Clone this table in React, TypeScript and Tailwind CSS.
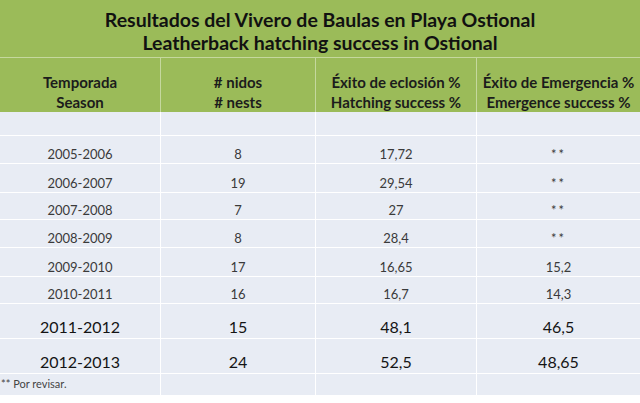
const ROWS = [
  { season: "2005-2006", nests: "8", hatch: "17,72", emerg: "**", h: "h-[28px]", big: false },
  { season: "2006-2007", nests: "19", hatch: "29,54", emerg: "**", h: "h-[29px]", big: false },
  { season: "2007-2008", nests: "7", hatch: "27", emerg: "**", h: "h-[27px]", big: false },
  { season: "2008-2009", nests: "8", hatch: "28,4", emerg: "**", h: "h-[28px]", big: false },
  { season: "2009-2010", nests: "17", hatch: "16,65", emerg: "15,2", h: "h-[29px]", big: false },
  { season: "2010-2011", nests: "16", hatch: "16,7", emerg: "14,3", h: "h-[27px]", big: false },
  { season: "2011-2012", nests: "15", hatch: "48,1", emerg: "46,5", h: "h-[35px]", big: true },
  { season: "2012-2013", nests: "24", hatch: "52,5", emerg: "48,65", h: "h-[35px]", big: true },
];

const COLS = "grid grid-cols-[161px_155px_161px_163px]";

function DataRow({ cells, h, big }: { cells: string[]; h: string; big: boolean }) {
  return (
    <div className={`${COLS} ${h}`}>
      {cells.map((c, i) => (
        <div
          key={i}
          className={`flex items-end justify-center border-b border-white bg-[#e8ecf4] leading-none ${
            i < 3 ? "border-r" : ""
          } ${big ? "pb-[3px] text-[16px] text-[#141414]" : "pb-[2px] text-[13px] text-[#3a3a3a]"} ${
            c === "**" ? "tracking-[2px]" : ""
          }`}
        >
          {c}
        </div>
      ))}
    </div>
  );
}

export default function App() {
  return (
    <div className="w-[640px] h-[403px] bg-white font-['Lato',sans-serif] leading-tight">
      <div className="flex h-[57px] flex-col items-center justify-center bg-[#9bbb59] pt-[4px] text-[19.5px] font-bold leading-[23px] text-[#111]">
        <div>Resultados del Vivero de Baulas en Playa Ostional</div>
        <div>Leatherback hatching success in Ostional</div>
      </div>
      <div className={`${COLS} h-[55px] border-t border-[#c5d89e] bg-[#9bbb59] text-[15px] font-bold leading-[20px] text-[#1c1c1c]`}>
        <div className="flex flex-col items-center justify-end border-r border-[#c5d89e]">
          <span>Temporada</span>
          <span>Season</span>
        </div>
        <div className="flex flex-col items-center justify-end border-r border-[#c5d89e]">
          <span># nidos</span>
          <span># nests</span>
        </div>
        <div className="flex flex-col items-center justify-end border-r border-[#c5d89e]">
          <span>Éxito de eclosión %</span>
          <span>Hatching success %</span>
        </div>
        <div className="flex flex-col items-center justify-end">
          <span>Éxito de Emergencia %</span>
          <span>Emergence success %</span>
        </div>
      </div>
      <DataRow cells={["", "", "", ""]} h="h-[24px]" big={false} />
      {ROWS.map((r) => (
        <DataRow key={r.season} cells={[r.season, r.nests, r.hatch, r.emerg]} h={r.h} big={r.big} />
      ))}
      <div className={`${COLS} h-[21px]`}>
        <div className="border-r border-white bg-[#e8ecf4] pl-[1px] pt-[3px] text-[11px] text-[#444]">
          ** Por revisar.
        </div>
        <div className="border-r border-white bg-[#e8ecf4]" />
        <div className="border-r border-white bg-[#e8ecf4]" />
        <div className="bg-[#e8ecf4]" />
      </div>
    </div>
  );
}
